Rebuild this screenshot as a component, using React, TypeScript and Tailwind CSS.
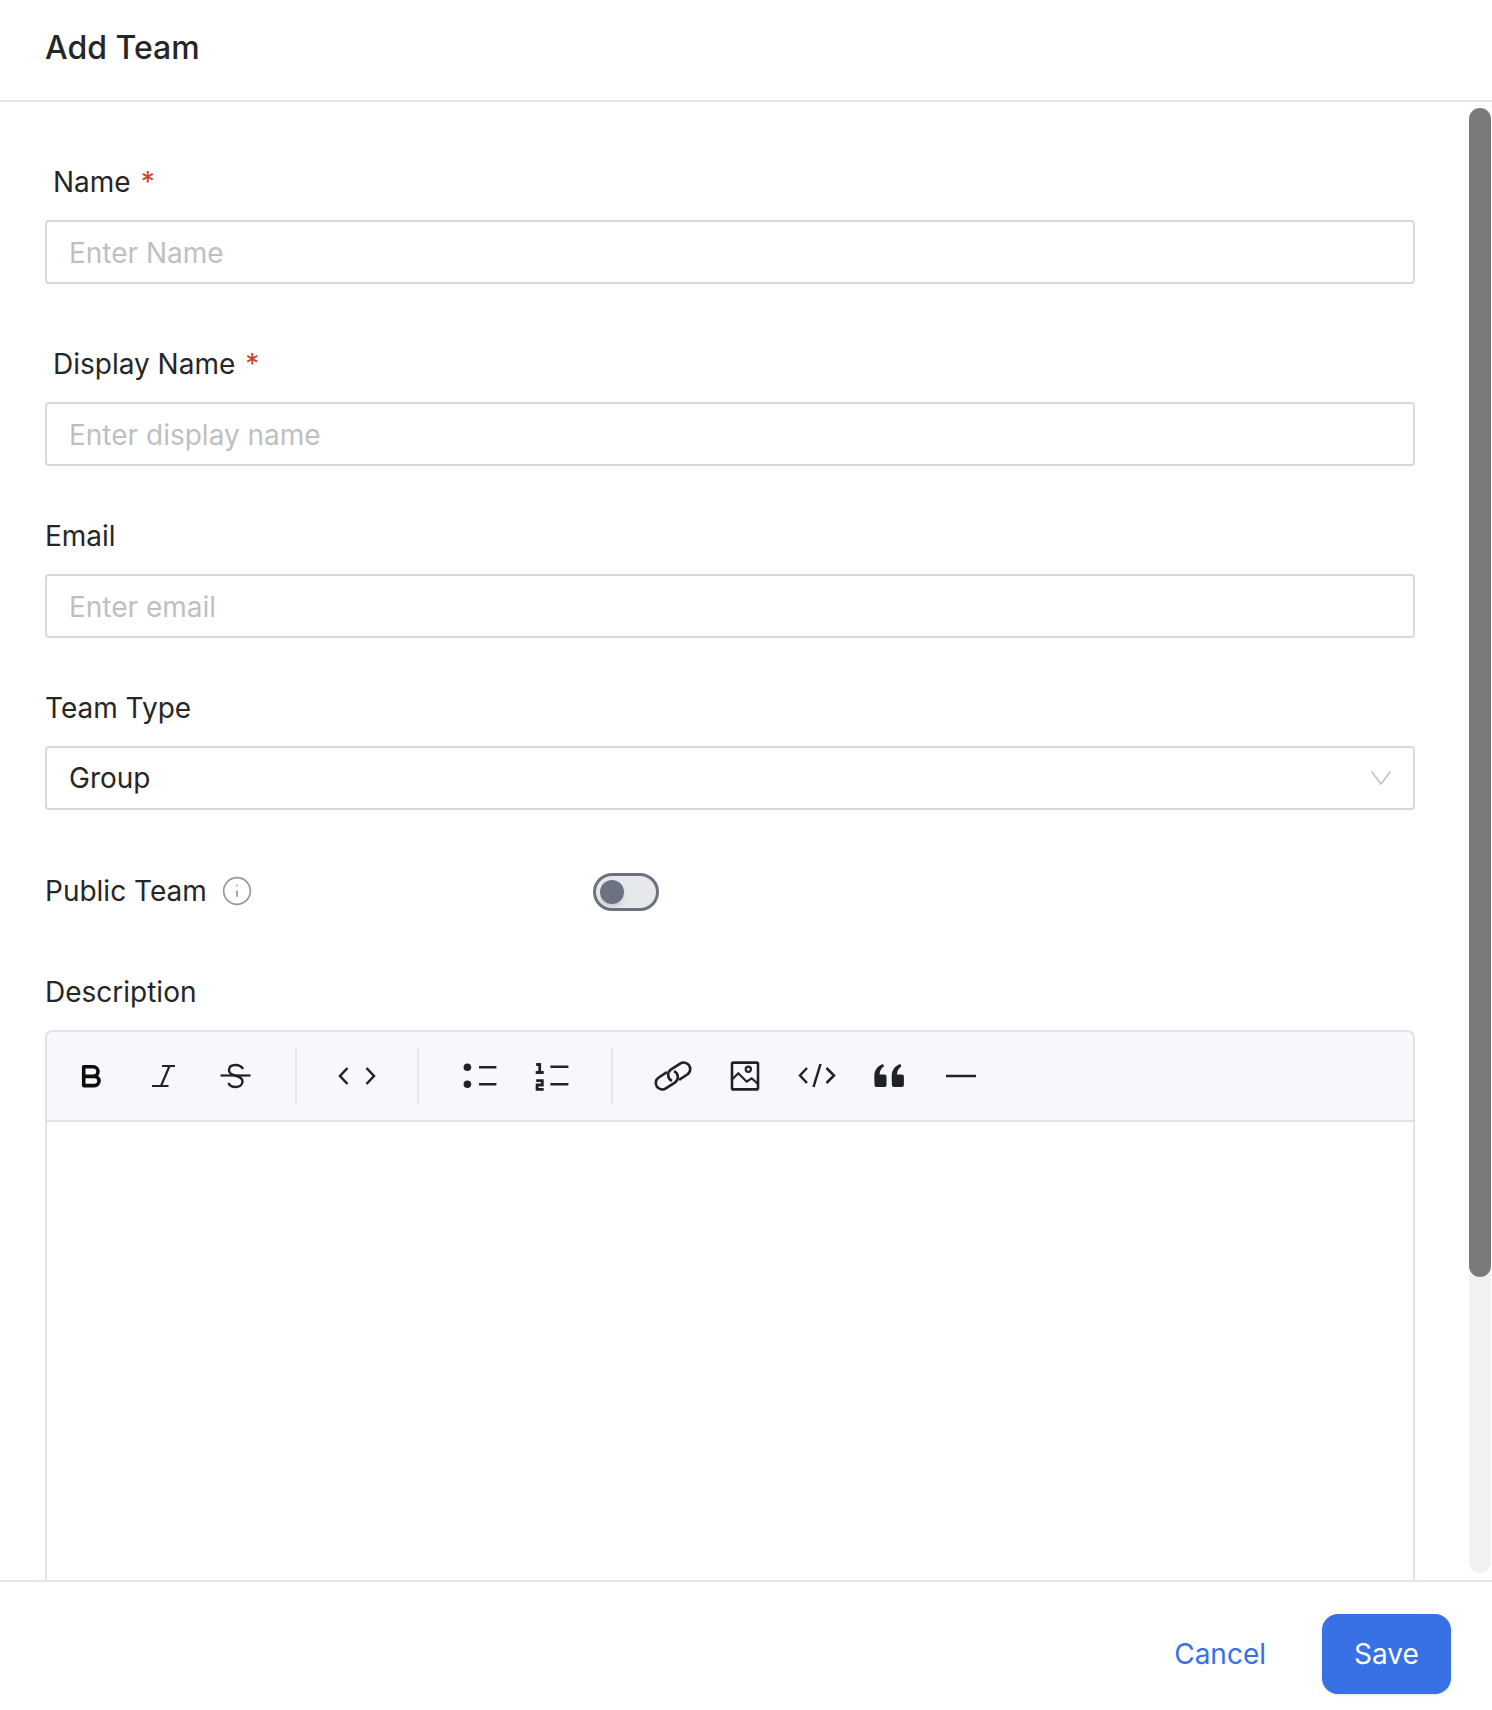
import React from 'react';
import { Info } from 'lucide-react';

const Label = ({ text, required }: { text: string; required?: boolean }) => (
  <div className={`h-[36px] flex items-center text-[28px] leading-[36px] text-[#262626] ${required ? 'pl-[8px]' : ''}`}>
    {text}
    {required && <span className="text-[#d13f2b] ml-[10px]">*</span>}
  </div>
);

const Field = ({ placeholder }: { placeholder: string }) => (
  <input
    placeholder={placeholder}
    className="mt-[20px] block w-full h-[64px] px-[22px] pt-[2px] border-2 border-[#d9d9d9] rounded-[4px] text-[28px] text-[#262626] placeholder:text-[#bfbfbf] outline-none"
  />
);

const ToolIcon = ({ children }: { children: React.ReactNode }) => (
  <button className="w-[72px] h-[72px] flex items-center justify-center text-[#1f2328]">
    <svg width="40" height="40" viewBox="0 0 40 40" fill="none" stroke="currentColor" strokeWidth="2.6">
      {children}
    </svg>
  </button>
);

const Divider = () => <div className="w-[2px] h-[56px] bg-[#e6e6eb] mx-[24px]" />;

export default function App() {
  return (
    <div className="h-[1710px] w-full flex flex-col bg-white font-['Inter',sans-serif] overflow-hidden">
      <header className="h-[102px] shrink-0 flex items-center px-[45px] border-b-2 border-[#e2e6ec]">
        <h1 className="text-[32px] font-medium text-[#262626] pb-[4px]">Add Team</h1>
      </header>

      <div className="flex-1 min-h-0 flex">
        <main className="flex-1 min-w-0 pl-[45px] pr-[54px] pt-[62px] overflow-hidden">
          <Label text="Name" required />
          <Field placeholder="Enter Name" />

          <div className="mt-[62px]">
            <Label text="Display Name" required />
            <Field placeholder="Enter display name" />
          </div>

          <div className="mt-[52px]">
            <Label text="Email" />
            <Field placeholder="Enter email" />
          </div>

          <div className="mt-[52px]">
            <Label text="Team Type" />
            <div className="mt-[20px] h-[64px] px-[22px] border-2 border-[#d9d9d9] rounded-[4px] flex items-center justify-between text-[28px] text-[#262626]">
              Group
              <svg width="20" height="14" viewBox="0 0 20 14" fill="none" stroke="#bfbfbf" strokeWidth="1.5">
                <path d="M0.5 0.5L10 13L19.5 0.5" />
              </svg>
            </div>
          </div>

          <div className="mt-[62px] flex items-center h-[40px]">
            <div className="w-[548px] flex items-center text-[28px] text-[#262626] pb-[3px]">
              Public Team
              <Info className="ml-[14px] w-[32px] h-[32px] text-[#999999]" strokeWidth={1.25} />
            </div>
            <div className="w-[66px] h-[38px] rounded-full border-[3px] border-[#6b7280] bg-[#e7e8ea] flex items-center pl-[4px]">
              <div className="w-[24px] h-[24px] rounded-full bg-[#6b7280] shadow-md" />
            </div>
          </div>

          <div className="mt-[62px]">
            <Label text="Description" />
            <div className="mt-[20px] border-2 border-b-0 border-[#e0e1e9] rounded-t-[8px] h-[700px]">
              <div className="h-[90px] bg-[#f7f8fc] border-b-2 border-[#e0e1e9] rounded-t-[6px] flex items-center pl-[8px]">
                <ToolIcon>
                  {/* bold */}
                  <path d="M12.7 10.8H22.2a4.8 4.8 0 0 1 0 9.6H12.7ZM12.7 20.4H23.4a4.6 4.6 0 0 1 0 9.2H12.7Z" strokeWidth="3.6" strokeLinejoin="round" stroke="#0d0d0d" />
                </ToolIcon>
                <ToolIcon>
                  {/* italic */}
                  <path d="M19 10H32M9 30H25.5M26.5 10L18 30" strokeWidth="2.2" />
                </ToolIcon>
                <ToolIcon>
                  {/* strike */}
                  <path d="M5.5 19.5H35.5" strokeWidth="2.2" />
                  <path d="M28 13C26 9.5 23 9 20.5 9C16.5 9 14 11 14 14.2C14 17 16.5 18.5 20 19.5C24 20.5 27.5 22 27.5 25.5C27.5 29 24.5 31 20.5 31C17 31 14.5 29.5 13.5 27" strokeWidth="2.4" />
                </ToolIcon>
                <Divider />
                <ToolIcon>
                  {/* inline code */}
                  <path d="M10.5 12L3 20L10.5 28M29.5 12L37 20L29.5 28" strokeWidth="2.5" />
                </ToolIcon>
                <Divider />
                <ToolIcon>
                  {/* bullet list */}
                  <circle cx="8.4" cy="11.3" r="3.8" fill="currentColor" stroke="none" />
                  <circle cx="8.4" cy="28.3" r="3.8" fill="currentColor" stroke="none" />
                  <path d="M20 11.3H37.4M20 28.3H37.4" strokeWidth="2.4" />
                </ToolIcon>
                <ToolIcon>
                  {/* numbered list */}
                  <path d="M5.2 8.5H8.7V16.5M4.7 16.5H12.7M5.2 24.7H11.3V29H6.1V33.3H12.7" strokeWidth="2.8" />
                  <path d="M19.4 10.7H37.4M19.4 28.3H37.4" strokeWidth="2.4" />
                </ToolIcon>
                <Divider />
                <ToolIcon>
                  {/* link */}
                  <g transform="rotate(-33 20 20)">
                    <path d="M17 13.5H7.2a6.5 6.5 0 0 0 0 13H18a6.5 6.5 0 0 0 5.5-10" />
                    <path d="M23 26.5H32.8a6.5 6.5 0 0 0 0-13H22a6.5 6.5 0 0 0-5.5 10" />
                  </g>
                </ToolIcon>
                <ToolIcon>
                  {/* image */}
                  <rect x="7" y="6.6" width="26" height="26.8" rx="1.5" />
                  <circle cx="23.3" cy="13.3" r="2.6" strokeWidth="2.2" />
                  <path d="M6.5 24L13.3 17.2L21.7 25.7L26.7 22.3L33.5 28.5" strokeWidth="2.2" />
                </ToolIcon>
                <ToolIcon>
                  {/* code block */}
                  <path d="M10 12L3 19.5L10 27M23.5 8L16.5 31M29.5 12L37 19.5L29.5 27" strokeWidth="2.5" />
                </ToolIcon>
                <ToolIcon>
                  {/* quote */}
                  <path d="M5.3 20C5.3 14 9 9.5 14 8L15 10.5C12.5 12 11 14 10.5 18.5H15.5a2 2 0 0 1 2 2V29a2 2 0 0 1-2 2H7.5a2 2 0 0 1-2-2Z" fill="currentColor" stroke="none" />
                  <path d="M22.7 20C22.7 14 26.4 9.5 31.4 8L32.4 10.5C29.9 12 28.4 14 27.9 18.5H32.9a2 2 0 0 1 2 2V29a2 2 0 0 1-2 2H24.9a2 2 0 0 1-2-2Z" fill="currentColor" stroke="none" />
                </ToolIcon>
                <ToolIcon>
                  {/* horizontal rule */}
                  <path d="M5 20H35" strokeWidth="2.5" />
                </ToolIcon>
              </div>
            </div>
          </div>
        </main>

        <div className="w-[23px] shrink-0 pt-[6px] pb-[7px] pr-[1px]">
          <div className="h-full rounded-full bg-[#f1f1f1]">
            <div className="h-[1169px] rounded-full bg-[#7a7a7a]" />
          </div>
        </div>
      </div>

      <footer className="h-[130px] shrink-0 border-t-2 border-[#e2e6ec] flex items-center justify-end pr-[41px] pt-[16px]">
        <button className="text-[28px] text-[#3870e6] mr-[56px]">Cancel</button>
        <button className="w-[129px] h-[80px] rounded-[16px] bg-[#3870e6] text-[28px] text-white shadow-sm">Save</button>
      </footer>
    </div>
  );
}
